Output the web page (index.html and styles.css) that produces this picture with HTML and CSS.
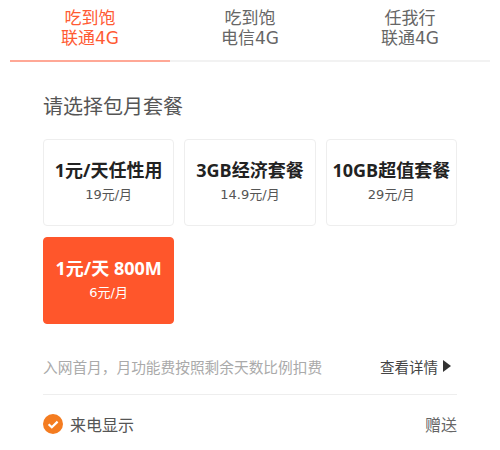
FILE: index.html

```html
<!DOCTYPE html>
<html lang="zh-CN">
<head>
  <meta charset="UTF-8" />
  <meta name="viewport" content="width=device-width, initial-scale=1.0" />
  <title>包月套餐</title>
  <link rel="stylesheet" href="styles.css">
</head>
<body>
  <div class="tabs">
    <div class="tab active">吃到饱<br>联通4G</div>
    <div class="tab">吃到饱<br>电信4G</div>
    <div class="tab">任我行<br>联通4G</div>
  </div>

  <div class="content">
    <h2 class="section-title">请选择包月套餐</h2>

    <div class="plans">
      <div class="plan">
        <div class="plan-name">1元/天任性用</div>
        <div class="plan-price">19元/月</div>
      </div>
      <div class="plan">
        <div class="plan-name">3GB经济套餐</div>
        <div class="plan-price">14.9元/月</div>
      </div>
      <div class="plan">
        <div class="plan-name">10GB超值套餐</div>
        <div class="plan-price">29元/月</div>
      </div>
      <div class="plan selected">
        <div class="plan-name">1元/天 800M</div>
        <div class="plan-price">6元/月</div>
      </div>
    </div>

    <div class="note-row">
      <span class="note">入网首月，月功能费按照剩余天数比例扣费</span>
      <span class="details">查看详情<span class="arrow"></span></span>
    </div>

    <div class="perk-row">
      <span class="perk">
        <svg class="check" width="20" height="20" viewBox="0 0 20 20">
          <circle cx="10" cy="10" r="10" fill="#f47c20"/>
          <path d="M5.6 10.2 L8.8 13.2 L14.6 7.6" fill="none" stroke="#fff" stroke-width="2.2"/>
        </svg>
        来电显示
      </span>
      <span class="gift">赠送</span>
    </div>
  </div>
</body>
</html>
```

FILE: styles.css

```css
body {
  margin: 0;
  background-color: #fff;
  color: #555;
  font-family: "DejaVu Sans", "Noto Sans CJK SC", sans-serif;
  overflow: hidden;
}
.tabs {
  display: flex;
  margin: 0 10px;
  height: 62px;
}
.tab {
  flex: 1;
  box-sizing: border-box;
  padding-top: 8px;
  border-bottom: 2px solid #f2f2f2;
  text-align: center;
  font-size: 17px;
  line-height: 20px;
  color: #666;
}
.tab.active {
  color: #ff5a33;
  border-bottom-color: #ffa896;
}
.content {
  padding: 0 43px;
}
.section-title {
  margin: 31px 0 18px;
  font-size: 20px;
  line-height: 28px;
  font-weight: normal;
  color: #555;
}
.plans {
  display: grid;
  grid-template-columns: repeat(3, 1fr);
  gap: 11px 10px;
}
.plan {
  box-sizing: border-box;
  height: 87px;
  padding-top: 18px;
  border: 1px solid #eee;
  border-radius: 4px;
  text-align: center;
}
.plan-name {
  font-family: "Open Sans", "Noto Sans CJK SC", sans-serif;
  font-size: 18px;
  line-height: 24px;
  font-weight: bold;
  color: #222;
}
.plan-price {
  margin-top: 3px;
  font-size: 13px;
  line-height: 20px;
  color: #555;
}
.plan.selected {
  background-color: #ff562b;
  border-color: #ff562b;
}
.plan.selected .plan-name,
.plan.selected .plan-price {
  color: #fff;
}
.note-row {
  display: flex;
  justify-content: space-between;
  align-items: center;
  margin-top: 29px;
  height: 26px;
}
.note {
  font-size: 14.7px;
  color: #aaa;
}
.details {
  display: flex;
  align-items: center;
  padding-right: 6px;
  font-size: 14.5px;
  color: #444;
}
.arrow {
  margin-left: 5px;
  border-left: 8px solid #333;
  border-top: 6px solid transparent;
  border-bottom: 6px solid transparent;
}
.perk-row {
  display: flex;
  justify-content: space-between;
  align-items: center;
  margin-top: 15px;
  padding-top: 16px;
  border-top: 1px solid #eee;
  font-size: 16px;
  height: 26px;
}
.perk {
  display: flex;
  align-items: center;
  gap: 7px;
  color: #555;
}
.gift {
  color: #666;
}
```
